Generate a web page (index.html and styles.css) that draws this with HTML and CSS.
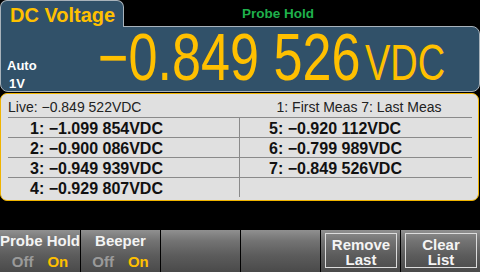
FILE: index.html
```html
<!DOCTYPE html>
<html>
<head>
<meta charset="utf-8">
<link rel="stylesheet" href="styles.css">
</head>
<body>
<div class="screen">
  <div class="head">
    <div class="tab">DC Voltage</div>
    <div class="status">Probe Hold</div>
  </div>
  <div class="panel">
    <div class="range"><div class="r1">Auto</div><div class="r2">1V</div></div>
    <div class="reading"><span class="num">&minus;0.849 526</span><span class="unit">VDC</span></div>
  </div>
  <div class="list">
    <div class="lhead">
      <div class="live">Live: &minus;0.849 522VDC</div>
      <div class="legend">1: First Meas 7: Last Meas</div>
    </div>
    <div class="rows">
      <div class="cell l">1: &minus;1.099 854VDC</div>
      <div class="cell r">5: &minus;0.920 112VDC</div>
      <div class="cell l">2: &minus;0.900 086VDC</div>
      <div class="cell r">6: &minus;0.799 989VDC</div>
      <div class="cell l">3: &minus;0.949 939VDC</div>
      <div class="cell r">7: &minus;0.849 526VDC</div>
      <div class="cell l">4: &minus;0.929 807VDC</div>
      <div class="cell r"></div>
    </div>
  </div>
  <div class="keys">
    <div class="key">
      <div class="kt">Probe Hold</div>
      <div class="opts"><span class="off">Off</span><span class="on">On</span></div>
    </div>
    <div class="key">
      <div class="kt">Beeper</div>
      <div class="opts"><span class="off">Off</span><span class="on">On</span></div>
    </div>
    <div class="key"></div>
    <div class="key"></div>
    <div class="key"><div class="btn">Remove<br>Last</div></div>
    <div class="key"><div class="btn">Clear<br>List</div></div>
  </div>
</div>
</body>
</html>
```
FILE: styles.css
```css
* { box-sizing: border-box; margin: 0; padding: 0; }
html, body { background: #000; }
body {
  margin: 0;
  width: 480px;
  height: 272px;
  overflow: hidden;
  font-family: "Liberation Sans", Arial, sans-serif;
}
.screen {
  width: 480px;
  height: 272px;
  display: flex;
  flex-direction: column;
}
.head {
  display: flex;
  height: 26px;
  flex-shrink: 0;
  align-items: flex-end;
}
.tab {
  width: 124px;
  height: 27px;
  margin-bottom: -1px;
  position: relative;
  z-index: 1;
  background: #315169;
  border: 1px solid #a9b3bb;
  border-bottom: none;
  border-radius: 7px 7px 0 0;
  color: #ffc000;
  font-weight: bold;
  font-size: 20px;
  line-height: 24px;
  padding: 2px 0 0 9px;
}
.status {
  align-self: flex-start;
  padding: 6px 0 0 118px;
  color: #1fb04c;
  font-weight: bold;
  font-size: 13.5px;
  line-height: 16px;
}
.panel {
  height: 66px;
  flex-shrink: 0;
  background: #315169;
  border: 1px solid #a9b3bb;
  border-radius: 0 8px 8px 8px;
  display: flex;
  align-items: flex-end;
  overflow: hidden;
}
.range {
  width: 97px;
  flex-shrink: 0;
  padding-left: 6px;
  color: #fff;
  font-weight: bold;
  font-size: 13px;
  line-height: 15px;
}
.r2 { margin-top: 3px; padding-left: 2px; }
.reading {
  flex-shrink: 0;
  color: #ffc000;
  font-size: 66px;
  line-height: 66px;
  height: 66px;
  margin-bottom: 1px;
  white-space: nowrap;
  transform: scaleX(0.79);
  transform-origin: left bottom;
}
.unit {
  display: inline-block;
  font-size: 50px;
  line-height: 50px;
  margin-left: 6px;
  transform: scaleX(0.96);
  transform-origin: left bottom;
}
.list {
  margin: 1px 1px 0 0;
  height: 108px;
  flex-shrink: 0;
  background: #e0e0e0;
  border: 1px solid #f0b400;
  border-radius: 7px;
  color: #111;
}
.lhead {
  display: grid;
  grid-template-columns: 239px 1fr;
  padding-top: 4px;
  height: 23px;
  font-size: 14px;
  line-height: 19px;
  color: #222;
}
.live { padding-left: 7px; }
.legend { text-align: center; }
.rows {
  display: grid;
  grid-template-columns: 239px 1fr;
}
.cell {
  height: 20px;
  border-top: 1px solid #8a8a8a;
  padding-top: 2px;
  font-size: 16px;
  font-weight: bold;
  line-height: 17px;
  white-space: nowrap;
}
.cell.l {
  margin-left: 7px;
  padding-left: 22px;
  border-right: 1px solid #8a8a8a;
}
.cell.r {
  margin-right: 6px;
  padding-left: 29px;
}
.keys {
  margin-top: auto;
  height: 42px;
  flex-shrink: 0;
  display: grid;
  grid-template-columns: repeat(6, 1fr);
  gap: 1px;
}
.key {
  background: linear-gradient(#909090 0%, #747474 25%, #5c5c5c 60%, #4a4a4a 100%);
  color: #f4f4f4;
  font-weight: bold;
  font-size: 15px;
  text-align: center;
  display: flex;
  flex-direction: column;
}
.kt {
  padding-top: 2px;
  line-height: 18px;
  white-space: nowrap;
}
.opts {
  margin-top: 3px;
  line-height: 18px;
  display: flex;
  justify-content: center;
  gap: 14px;
}
.off { color: #9a9a9a; }
.on { color: #ffc000; }
.btn {
  flex: 1;
  margin: 3px 3px 4px 4px;
  border: 1px solid #dcdcdc;
  padding-top: 3px;
  line-height: 15px;
}
```
